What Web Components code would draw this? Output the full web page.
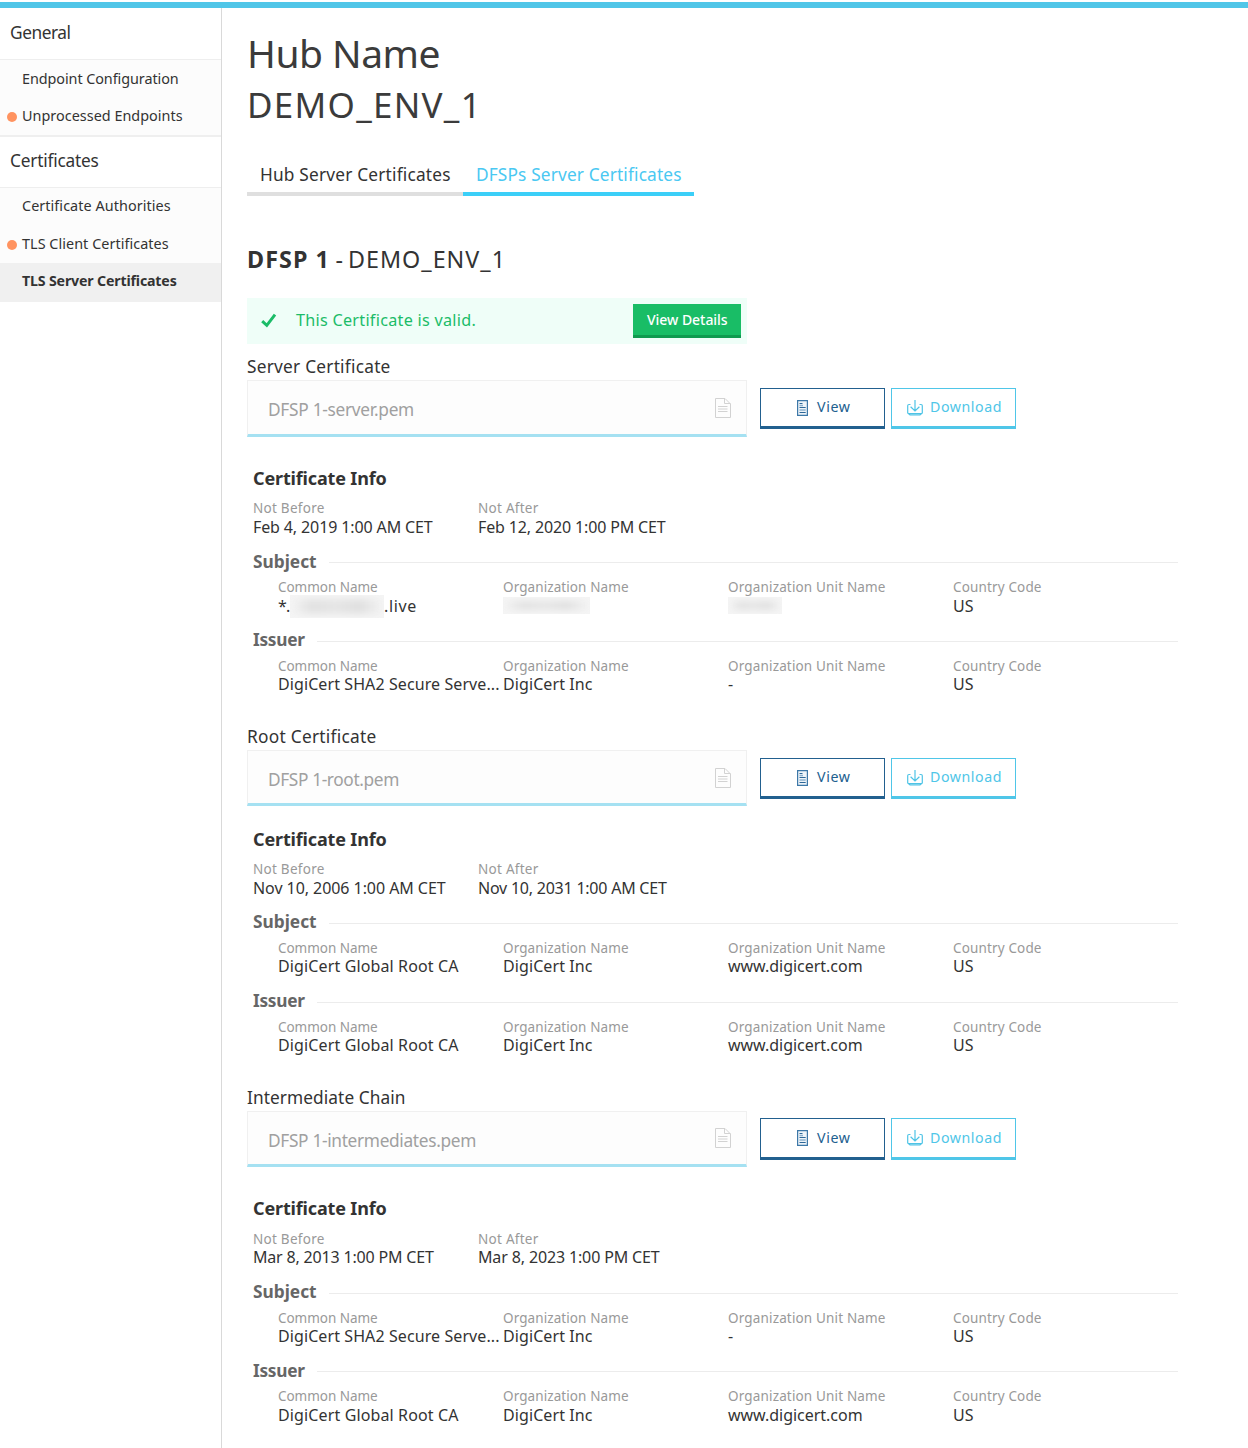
<!DOCTYPE html>
<html lang="en"><head><meta charset="utf-8"><title>Hub Name</title>
<style>
body{margin:0;background:#fff;color:#333;font-family:"Noto Sans","Open Sans",sans-serif}
</style></head><body>
<hub-page></hub-page>
<script>
const make=(el,html)=>{el.attachShadow({mode:'open'}).innerHTML=html};

// Single line of text tracked to a given width. Its baseline sits 5px above its bottom edge.
// The flush attribute drops the small inset at either end.
customElements.define('fit-text',class extends HTMLElement{
  constructor(){super();make(this,`<style>:host{display:inline-block;box-sizing:border-box;white-space:pre;line-height:calc(10px + .776em);flex:none}</style><slot></slot>`)}
  connectedCallback(){
    const w=+this.getAttribute('w'),s=+this.getAttribute('s');
    if(s)this.style.fontSize=s+'px';
    if(!w)return;
    const inset=this.hasAttribute('flush')?0:1.4;
    const n=this.textContent.length, nat=this.getBoundingClientRect().width;
    this.style.letterSpacing=((w-inset-nat)/n).toFixed(3)+'px';
    this.style.width=w+'px';
    if(inset)this.style.paddingLeft='1px';
  }
});

customElements.define('nav-head',class extends HTMLElement{
  constructor(){super();make(this,`<style>:host{display:flex;align-items:flex-end;box-sizing:border-box;padding:0 0 15px 9px;border-bottom:1px solid #eee;background:#fff;height:51px}</style><slot></slot>`)}
});
customElements.define('nav-item',class extends HTMLElement{
  constructor(){super();make(this,`<style>:host{display:flex;align-items:flex-end;box-sizing:border-box;height:37.5px;padding:0 0 8px 7px;background:#fcfcfc}
  i{width:10px;height:10px;border-radius:50%;margin:0 4px 4px 0}:host([dot]) i{background:#ff9360}
  :host([active]){background:#f0f0f0;font-weight:700;height:39px;padding-bottom:11px}</style><i></i><slot></slot>`)}
});
customElements.define('side-nav',class extends HTMLElement{
  constructor(){super();make(this,`<style>:host{display:block;width:221px;border-right:1px solid #d9d9d9;padding-top:1px;height:1439px}
  .sep{height:2px;background:#efefef}</style>
  <nav-head><fit-text s="17.3" w="62">General</fit-text></nav-head>
  <nav-item style="height:37px"><fit-text s="14.4" w="158">Endpoint Configuration</fit-text></nav-item>
  <nav-item dot style="height:38px;padding-bottom:9px"><fit-text s="14.4" w="162">Unprocessed Endpoints</fit-text></nav-item>
  <div class="sep"></div>
  <nav-head><fit-text s="17.3" w="90">Certificates</fit-text></nav-head>
  <nav-item style="height:37px;padding-bottom:9px"><fit-text s="14.4" w="150">Certificate Authorities</fit-text></nav-item>
  <nav-item dot style="height:38px;padding-bottom:9px"><fit-text s="14.4" w="148">TLS Client Certificates</fit-text></nav-item>
  <nav-item active><fit-text s="14.2" w="156">TLS Server Certificates</fit-text></nav-item>`)}
});

customElements.define('hub-tab',class extends HTMLElement{
  constructor(){super();make(this,`<style>:host{display:flex;align-items:flex-end;box-sizing:border-box;height:40px;padding:0 12px 6px;border-bottom:4px solid #dfdfdf}
  :host([active]){color:#4ac8f2;border-color:#3bcff8}</style><slot></slot>`)}
});

customElements.define('valid-banner',class extends HTMLElement{
  constructor(){super();make(this,`<style>:host{display:flex;box-sizing:border-box;width:500px;height:46px;background:#effef8;color:#1bbc68;padding:6px 6px 0 14px}
  svg{margin:9px 19px 0 0;width:16px;height:15px}.m{padding-top:5px;display:flex;height:23px;align-items:flex-end}
  button{all:unset;margin-left:auto;box-sizing:border-box;width:108px;height:34px;background:#19bd66;border-bottom:3px solid #0f9a4f;color:#fff;font-weight:500;display:flex;justify-content:center;align-items:flex-end;padding-bottom:4px}</style>
  <svg viewBox="0 0 16 15"><path d="M1.2 8.2 5.8 12.4 14 1.6" fill="none" stroke="#1bbc68" stroke-width="3"/></svg>
  <div class="m"><fit-text flush s="16.2" w="180">This Certificate is valid.</fit-text></div>
  <button><fit-text s="14" w="82">View Details</fit-text></button>`)}
});

customElements.define('file-field',class extends HTMLElement{
  constructor(){super();const h=this.getAttribute('h');make(this,`<style>:host{display:flex;box-sizing:border-box;width:500px;height:${h}px;background:#fdfdfd;border:1px solid #f0f0f0;border-bottom:3px solid #a5e1f2;padding:0 15px 0 20px;justify-content:space-between;align-items:flex-start;color:#a0a0a0}
  div{height:40px;display:flex;align-items:flex-end}svg{width:16px;height:20px;margin-top:var(--icon-top,17px)}</style>
  <div><slot></slot></div>
  <svg viewBox="0 0 16 20" fill="none" stroke="#d2d2d2"><path d="M.5.5H10L15.500 6V19.500H.5ZM9.500.5V5.500H15.500"/><path d="M3 8.500H12.500M3 11H12.500M3 13.500H12.500"/></svg>`)}
});

const VIEW_ICON=`<svg viewBox="0 0 16 16"><path d="M3.600.600H13.400V15.400H3.600Z" fill="#eef4f9" stroke="#3d78a8" stroke-width="1.200"/><path d="M5.500 3.500H8.500M5.500 7.500H11.700M5.500 12.500H11.700" stroke="#2d6797"/><path d="M5.500 5.500H9M5.500 10H11.700" stroke="#8fb2ce" stroke-width="1.300"/></svg>`;
const DOWN_ICON=`<svg viewBox="0 0 16 16" fill="none" stroke="#4fc4e6" stroke-width="1.200"><path d="M3.500 4.500H2Q.7 4.500.7 5.800V13L3 15H13L15.300 13V5.800Q15.300 4.500 14 4.500H12.500M8 0V10.800M3.600 6.800 8 11 12.400 6.800M1 13.700H15"/></svg>`;
customElements.define('action-button',class extends HTMLElement{
  constructor(){super();const v=this.getAttribute('kind')==='view';const c=v?'#22608f':'#4fc6e8';make(this,`<style>:host{display:flex;box-sizing:border-box;width:125px;height:41px;border-style:solid;border-width:1px 1px 3px;border-color:${c};color:${c};justify-content:center;padding-top:8px}
  :host([tall]){height:42px}:host([tall]) div{height:21px}svg{width:16px;height:16px;margin:3px ${v?6:7}px 0 ${v?0:2}px}div{height:20px;display:flex;align-items:flex-end}</style>
  ${v?VIEW_ICON:DOWN_ICON}<div><slot></slot></div>`)}
});

// One line of the certificate details; --h is the distance from the previous baseline.
customElements.define('info-row',class extends HTMLElement{
  constructor(){super();make(this,`<style>:host{display:grid;grid-template:100%/repeat(4,225px);align-items:end;justify-items:start;height:var(--h)}
  ::slotted(*){margin-top:-6px}
  :host([indent]){padding-left:25px}:host([label]){color:#999}</style><slot></slot>`)}
});
customElements.define('group-head',class extends HTMLElement{
  constructor(){super();make(this,`<style>:host{display:flex;align-items:flex-end;height:var(--h);color:#666;font-weight:700;width:926px}
  hr{flex:1;border:0;height:1px;background:#ececec;margin:0 0 var(--lift) 12px}</style><slot></slot><hr>`)}
});
customElements.define('redacted-text',class extends HTMLElement{
  constructor(){super();make(this,`<style>:host{display:inline-block;overflow:hidden;background:#f5f5f5}i{display:block;height:100%;background:linear-gradient(90deg,#f3f3f3,#e2e2e2 22%,#e6e6e6 48%,#e0e0e0 75%,#f2f2f2);filter:blur(3px);margin:4px 2px;height:calc(100% - 8px)}</style><i></i>`)}
});

const LW={'Common Name':101,'Organization Name':127,'Organization Unit Name':159,'Country Code':90,'Not Before':73,'Not After':62};
const VW={'DigiCert SHA2 Secure Serve...':223,'DigiCert Global Root CA':182,'DigiCert Inc':91,'www.digicert.com':136,'US':22,'-':8};
const label=t=>`<fit-text s="13.500" w="${LW[t]}">${t}</fit-text>`;
const value=(t,w)=>t.startsWith('<')?t:`<fit-text s="16" w="${w||VW[t]}">${t}</fit-text>`;
const names=['Common Name','Organization Name','Organization Unit Name','Country Code'];

customElements.define('cert-section',class extends HTMLElement{
  set data(d){
    const r=d.rows;
    make(this,`<style>:host{display:block}.lab{display:flex;align-items:flex-end;height:29px;margin:0 0 2px -1px}
    .f{display:flex;align-items:flex-start;height:${d.gap}px}.b{display:flex;gap:6px;margin:${d.btop}px 0 0 13px}
    .info{padding-left:5px}.t{font-weight:700;height:29px;display:flex;align-items:flex-end}</style>
    <div class="lab"><fit-text s="17.300" w="${d.lw}">${d.title}</fit-text></div>
    <div class="f"><file-field h="${d.fh}" style="--icon-top:${d.icon}px"><fit-text flush s="17.300" w="${d.fw}">${d.file}</fit-text></file-field>
    <div class="b"><action-button kind="view" ${d.tall}><fit-text s="14.200" w="35">View</fit-text></action-button><action-button ${d.tall}><fit-text flush s="14.200" w="72">Download</fit-text></action-button></div></div>
    <div class="info"><div class="t"><fit-text s="18" w="135">Certificate Info</fit-text></div>
    <info-row label style="--h:${r[0]-1}px">${label('Not Before')}${label('Not After')}</info-row>
    <info-row style="--h:${r[1]}px">${value(d.from[0],d.from[1])}${value(d.to[0],d.to[1])}</info-row>
    <group-head style="--h:${r[2]}px;--lift:${d.lift[0]}px"><fit-text s="17.300" w="65">Subject</fit-text></group-head>
    <info-row indent label style="--h:${r[3]}px">${names.map(label).join('')}</info-row>
    <info-row indent style="--h:${r[4]}px">${d.subject.map(v=>value(v)).join('')}</info-row>
    <group-head style="--h:${r[5]}px;--lift:${d.lift[1]}px"><fit-text s="17.300" w="53">Issuer</fit-text></group-head>
    <info-row indent label style="--h:${r[6]}px">${names.map(label).join('')}</info-row>
    <info-row indent style="--h:${r[7]}px">${d.issuer.map(v=>value(v)).join('')}</info-row></div>`);
  }
});

const ROOT=['DigiCert Global Root CA','DigiCert Inc','www.digicert.com','US'];
const SHA=['DigiCert SHA2 Secure Serve...','DigiCert Inc','-','US'];
const CERTS=[
 {title:'Server Certificate',lw:145,file:'DFSP 1-server.pem',fw:146,fh:57,gap:82,btop:8,icon:17,tall:'',lift:[10,9],rows:[28,20,35,24,20,34,25,19],
  from:['Feb 4, 2019 1:00 AM CET',181],to:['Feb 12, 2020 1:00 PM CET',189],
  subject:['<div style="display:flex;align-items:flex-end;height:23px"><fit-text s="16" w="13">*.</fit-text><redacted-text style="width:94px;height:23px;margin-bottom:-1px"></redacted-text><fit-text flush s="16" w="33">.live</fit-text></div>',
   '<redacted-text style="width:87px;height:17px;margin:0 0 3px 1px"></redacted-text>','<redacted-text style="width:54px;height:17px;margin:0 0 3px 1px"></redacted-text>','US'],issuer:SHA},
 {title:'Root Certificate',lw:131,file:'DFSP 1-root.pem',fw:131,fh:56,gap:73,btop:8,icon:17,tall:'',lift:[9,9],rows:[28,20,34,25,19,35,25,19],
  from:['Nov 10, 2006 1:00 AM CET',194],to:['Nov 10, 2031 1:00 AM CET',190],subject:ROOT,issuer:ROOT},
 {title:'Intermediate Chain',lw:160,file:'DFSP 1-intermediates.pem',fw:208,fh:56,gap:81,btop:7,icon:16,tall:'tall',lift:[9,10],rows:[29,19,35,25,19,35,24,20],
  from:['Mar 8, 2013 1:00 PM CET',182],to:['Mar 8, 2023 1:00 PM CET',183],subject:SHA,issuer:ROOT}];

customElements.define('hub-page',class extends HTMLElement{
  constructor(){super();make(this,`<style>:host{display:block;height:1448px;overflow:hidden;padding-top:2px;box-sizing:border-box}
  .top{height:6px;background:#50c6e8}.cols{display:flex}main{padding-left:25px;flex:1}
  .row{display:flex;align-items:flex-end}.big{color:#3b3b3b}cert-section+cert-section{margin-top:24px}</style>
  <div class="top"></div>
  <div class="cols"><side-nav></side-nav><main>
   <div class="row big" style="height:65px"><fit-text flush s="39" w="193">Hub Name</fit-text></div>
   <div class="row big" style="height:50px"><fit-text flush s="35" w="235">DEMO_ENV_1</fit-text></div>
   <div class="row" style="height:73px"><hub-tab><fit-text s="17.3" w="192">Hub Server Certificates</fit-text></hub-tab><hub-tab active><fit-text s="17.3" w="207">DFSPs Server Certificates</fit-text></hub-tab></div>
   <div class="row" style="height:77px"><b><fit-text flush s="23.3" w="83">DFSP 1</fit-text></b><fit-text flush s="23.3" w="18"> - </fit-text><fit-text flush s="23.3" w="158">DEMO_ENV_1</fit-text></div>
   <valid-banner style="margin:25px 0 5px"></valid-banner>
   <div id="c"></div>
  </main></div>`);
   const c=this.shadowRoot.getElementById('c');
   CERTS.forEach(d=>{const e=document.createElement('cert-section');e.data=d;c.append(e)});
  }
});
</script></body></html>
